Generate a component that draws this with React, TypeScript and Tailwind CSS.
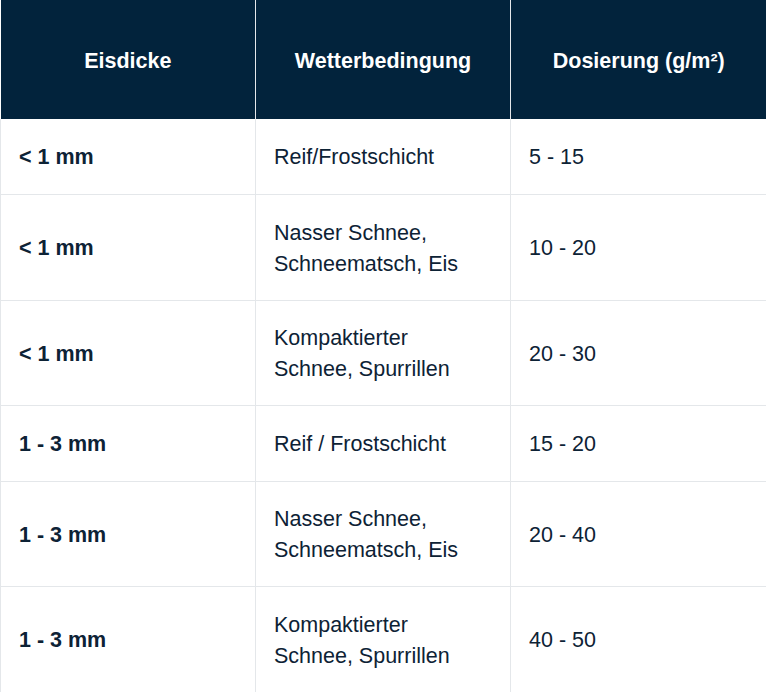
import React from 'react'

const rows = [
  { dicke: '< 1 mm', wetter: ['Reif/Frostschicht'], dosis: '5 - 15', h: 'h-[75px]' },
  { dicke: '< 1 mm', wetter: ['Nasser Schnee,', 'Schneematsch, Eis'], dosis: '10 - 20', h: 'h-[106px]' },
  { dicke: '< 1 mm', wetter: ['Kompaktierter', 'Schnee, Spurrillen'], dosis: '20 - 30', h: 'h-[105px]' },
  { dicke: '1 - 3 mm', wetter: ['Reif / Frostschicht'], dosis: '15 - 20', h: 'h-[76px]' },
  { dicke: '1 - 3 mm', wetter: ['Nasser Schnee,', 'Schneematsch, Eis'], dosis: '20 - 40', h: 'h-[105px]' },
  { dicke: '1 - 3 mm', wetter: ['Kompaktierter', 'Schnee, Spurrillen'], dosis: '40 - 50', h: 'h-[106px]' },
]

const App = () => {
  return (
    <div className="w-[766px] h-[692px] overflow-hidden bg-white [font-family:'Liberation_Sans',Arial,sans-serif] text-[21.5px] leading-[31px] text-[#0d2235]">
      <table className="w-[766px] border-collapse table-fixed">
        <colgroup>
          <col className="w-[255px]" />
          <col className="w-[255px]" />
          <col className="w-[256px]" />
        </colgroup>
        <thead>
          <tr className="bg-[#02233c] text-white font-bold h-[119px]">
            <th className="border-r border-[#e4e7ea] text-center pt-[3px]">Eisdicke</th>
            <th className="border-r border-[#e4e7ea] text-center pt-[3px]">Wetterbedingung</th>
            <th className="text-center pt-[3px]">Dosierung (g/m²)</th>
          </tr>
        </thead>
        <tbody>
          {rows.map((r, i) => (
            <tr key={i} className={`border-b border-[#e4e7ea] ${r.h}`}>
              <td className="border-l border-r border-[#e4e7ea] pl-[18px] pt-[3px] pb-0 align-middle font-bold">{r.dicke}</td>
              <td className="border-r border-[#e4e7ea] pl-[18px] pt-[3px] pb-0 align-middle">
                {r.wetter.map((w, j) => (
                  <div key={j}>{w}</div>
                ))}
              </td>
              <td className="border-r border-[#e4e7ea] pl-[18px] pt-[3px] pb-0 align-middle">{r.dosis}</td>
            </tr>
          ))}
        </tbody>
      </table>
    </div>
  )
}

export default App
